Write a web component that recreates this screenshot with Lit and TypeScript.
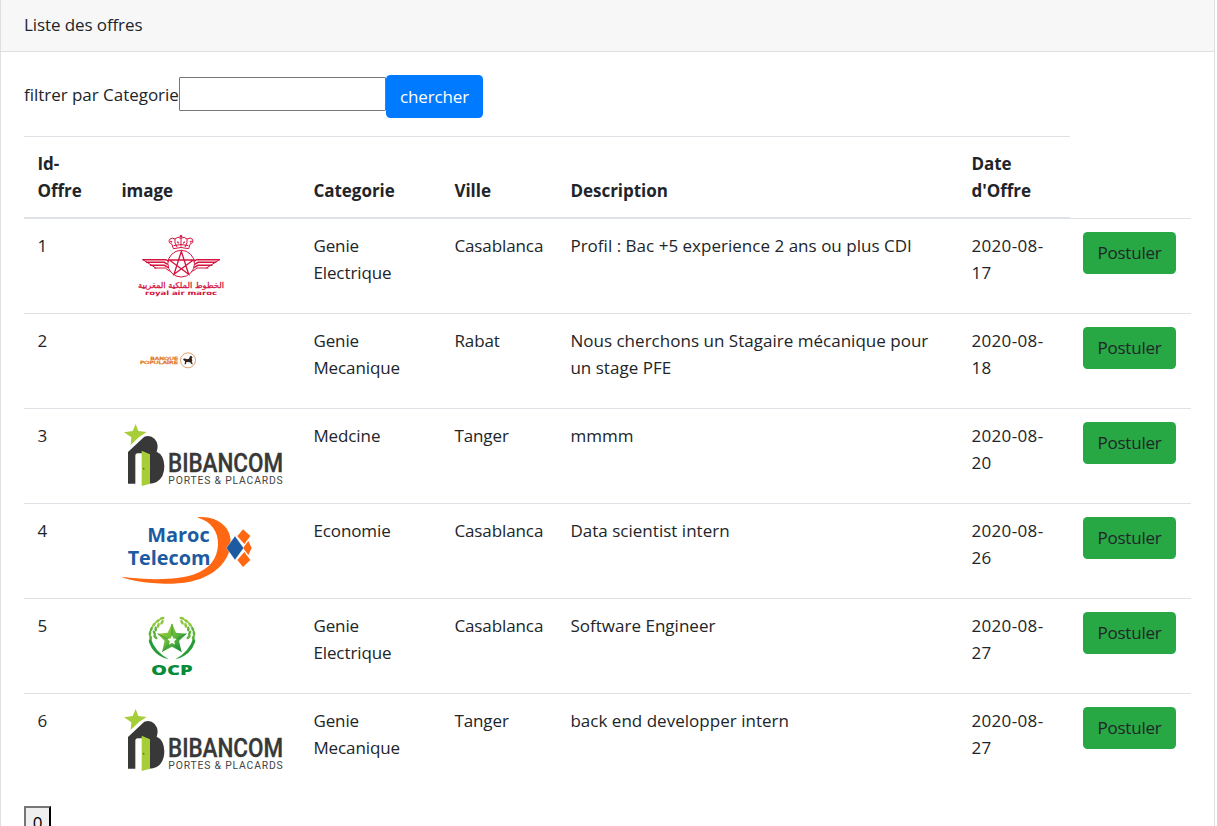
import { LitElement, html, css, svg } from "lit";
import { customElement, property } from "lit/decorators.js";

type Logo = "ram" | "bp" | "bibancom" | "telecom" | "ocp";

interface Offer {
  id: number;
  logo: Logo;
  category: string[];
  city: string;
  description: string[];
  date: string[];
}

const OFFERS: Offer[] = [
  { id: 1, logo: "ram", category: ["Genie", "Electrique"], city: "Casablanca", description: ["Profil : Bac +5 experience 2 ans ou plus CDI"], date: ["2020-08-", "17"] },
  { id: 2, logo: "bp", category: ["Genie", "Mecanique"], city: "Rabat", description: ["Nous cherchons un Stagaire mécanique pour", "un stage PFE"], date: ["2020-08-", "18"] },
  { id: 3, logo: "bibancom", category: ["Medcine"], city: "Tanger", description: ["mmmm"], date: ["2020-08-", "20"] },
  { id: 4, logo: "telecom", category: ["Economie"], city: "Casablanca", description: ["Data scientist intern"], date: ["2020-08-", "26"] },
  { id: 5, logo: "ocp", category: ["Genie", "Electrique"], city: "Casablanca", description: ["Software Engineer"], date: ["2020-08-", "27"] },
  { id: 6, logo: "bibancom", category: ["Genie", "Mecanique"], city: "Tanger", description: ["back end developper intern"], date: ["2020-08-", "27"] },
];

const wing = svg`
  <path d="M83 104H152L161 109" fill="none" stroke="#d5133f" stroke-width="4.500"/>
  <path d="M93 112H148L158 118" fill="none" stroke="#d5133f" stroke-width="4.500"/>
  <path d="M105 121H148L160 128" fill="none" stroke="#d5133f" stroke-width="4.500"/>
  <path d="M117 129H151L164 139M82 103L124 130" fill="none" stroke="#d5133f" stroke-width="3"/>`;

const leaves = [
  [62, 98, -15], [60, 85, 10], [64, 72, 25], [72, 59, 40], [83, 48, 55], [96, 40, 70],
  [76, 96, -45], [73, 84, -25], [77, 72, 0], [85, 61, 15], [96, 52, 30],
];
const branch = svg`
  <path d="M61 96Q73 139 116 163Q69 152 56 108Z" fill="#279c38"/>
  ${leaves.map(([x, y, r], i) => svg`<ellipse cx=${x} cy=${y} rx="4" ry="8" transform="rotate(${r} ${x} ${y})" fill=${i % 6 > 2 ? "#8cc63c" : "#5fb43c"}/>`)}`;

const LOGOS = {
  ram: svg`<svg class="logo" viewBox="18 21 495 201">
    <g fill="none" stroke="#d5133f" stroke-width="3">
      <path d="M175 71L171 58Q158 52 164 43Q171 36 180 42Q188 33 198 40Q208 33 216 42Q226 36 233 43Q238 53 225 58L221 71Q198 64 175 71Z"/>
      <path d="M180 42Q177 53 186 66M216 42Q219 53 210 66M198 40V65M176 62Q198 55 220 62"/>
      <path d="M166 48L171 52M230 48L225 52M187 50L191 55M209 50L205 55" stroke-width="4"/>
      <circle cx="198.500" cy="116" r="40"/>
      <path d="M199 79L221 148L163 105H235L177 148Z" stroke-width="4"/>
    </g>
    <circle cx="198" cy="34" r="4" fill="#d5133f"/>
    ${wing}<g transform="translate(397 0) scale(-1 1)">${wing}</g>
    <text class="arabic" x="198" y="189" text-anchor="middle" direction="rtl" font-size="24" textLength="258" lengthAdjust="spacingAndGlyphs" fill="#d5133f">الخطوط الملكية المغربية</text>
    <text class="wide" x="90" y="211" font-size="18" textLength="216" lengthAdjust="spacingAndGlyphs" fill="#d5133f">royal air maroc</text>
  </svg>`,
  bp: svg`<svg class="logo" viewBox="18 -24 495 201">
    <text class="wide light" x="106" y="75" font-size="13" textLength="83" lengthAdjust="spacingAndGlyphs" fill="#e47a2c">BANQUE</text>
    <text class="wide light" x="75" y="88" font-size="13" textLength="114" lengthAdjust="spacingAndGlyphs" fill="#e47a2c">POPULAIRE</text>
    <circle cx="219" cy="76" r="22.500" fill="#fff" stroke="#e08a4a" stroke-width="2.500"/>
    <path d="M204 72Q210 69 216 73L222 71Q223 63 228 62L233 67L230 70L232 76L230 81L234 88H230L225 82L214 81L213 88H209L210 79L206 76Z" fill="#33221b"/>
  </svg>`,
  bibancom: svg`<svg class="logo" viewBox="18 21 495 201">
    <path d="M62 27L70 48L95 51L73 65L47 90L49 67L27 52L53 48Z" fill="#a6ce39"/>
    <path d="M39 206V111L88 65Q107 59 119 72Q133 88 125 110Q147 119 148 154Q148 188 125 201Q115 206 102 206V123L80 115H68Q61 115 61 123V206Z" fill="#383838"/>
    <path d="M80 107L105 118V206L80 213Z" fill="#a6ce39"/>
    <circle cx="86" cy="161" r="2.500" fill="#567522"/>
    <text class="sans bold" x="159" y="170" font-size="76" textLength="345" lengthAdjust="spacingAndGlyphs" fill="#383838">BIBANCOM</text>
    <text class="sans" x="160" y="207" font-size="31" textLength="343" lengthAdjust="spacing" fill="#444">PORTES &amp; PLACARDS</text>
  </svg>`,
  telecom: svg`<svg class="logo" viewBox="18 21 495 201">
    <path d="M246 22C308 16 350 53 347 100C344 166 275 221 171 221C105 221 51 214 19 200C99 211 186 211 238 193C284 177 307 145 309 105C311 67 290 35 246 22Z" fill="#ff6712"/>
    <path d="M384 58L406 78L388 102L367 79Z M389 107L400 93L410 114L400 135L389 121L385 114Z M388 126L406 150L384 171L367 150Z" fill="#ff6712"/>
    <path d="M360 78L386 114L360 150L334 114Z" fill="#1c5ba1" stroke="#fff" stroke-width="1"/>
    <text class="condensed" x="97" y="95" font-size="61" textLength="187" lengthAdjust="spacingAndGlyphs" fill="#1c5ba1">Maroc</text>
    <text class="condensed" x="38" y="165" font-size="61" textLength="248" lengthAdjust="spacingAndGlyphs" fill="#1c5ba1">Telecom</text>
  </svg>`,
  ocp: svg`<svg class="logo" viewBox="-27 21 495 201">
    <defs><linearGradient id="star" x1="0" y1="0" x2="1" y2="1"><stop stop-color="#c6db38"/><stop offset=".5" stop-color="#62b83c"/><stop offset="1" stop-color="#078338"/></linearGradient></defs>
    ${branch}<g transform="translate(252 0) scale(-1 1)">${branch}</g>
    <path d="M126 55L138 83L170 86L147 108L155 141L126 125L96 141L104 108L82 86L113 83Z" fill="url(#star)"/>
    <path d="M126 91L130 100L140 102L133 109L135 119L126 114L117 119L119 109L112 102L122 100Z" fill="#f3faea"/>
    <path d="M126 57V91M169 86L140 102M154 140L135 119M97 140L117 119M83 86L112 102" stroke="#17863b" stroke-width="2"/>
    <text class="ocp" x="63" y="209" font-size="44" textLength="125" lengthAdjust="spacingAndGlyphs" fill="#078b38">OCP</text>
  </svg>`,
};

const lines = (parts: string[]) => parts.map((part, i) => (i ? html`<br />${part}` : part));

@customElement("offer-row")
export class OfferRow extends LitElement {
  @property({ attribute: false }) offer!: Offer;

  static styles = css`
    :host { display: grid; grid-template-columns: var(--columns); height: 95px; box-sizing: border-box; border-top: 1px solid #dee2e6; }
    .cell { padding: 13px 0 0 13.4px; white-space: nowrap; }
    .picture { padding-left: 12.7px; }
    .city { letter-spacing: -0.1px; }
    .date { letter-spacing: 0.35px; }
    .description { letter-spacing: 0.02px; }
    .action { padding-left: 13px; }
    .logo { display: block; width: 165px; height: 67px; overflow: visible; }
    .arabic { font-family: "DejaVu Sans", sans-serif; font-weight: 400; stroke: #d5133f; stroke-width: 0.8px; }
    .wide { font-family: "DejaVu Sans", sans-serif; font-weight: 700; }
    .light { font-weight: 400; stroke: #e47a2c; stroke-width: 0.9px; }
    .ocp { font-family: "Open Sans", sans-serif; font-weight: 800; }
    .sans { font-family: Roboto, sans-serif; }
    .bold { font-weight: 500; stroke: #383838; stroke-width: 1px; }
    .condensed { font-family: "Open Sans", sans-serif; font-weight: 700; }
    .apply { display: block; box-sizing: border-box; width: 93px; height: 42px; padding: 0 0 2px; border: 0; border-radius: 4.5px; background: #28a745; color: #212529; font: inherit; letter-spacing: -0.2px; }
  `;

  render() {
    const o = this.offer;
    return html`
      <div class="cell">${o.id}</div>
      <div class="cell picture">${LOGOS[o.logo]}</div>
      <div class="cell">${lines(o.category)}</div>
      <div class="cell city">${o.city}</div>
      <div class="cell description">${lines(o.description)}</div>
      <div class="cell date">${lines(o.date)}</div>
      <div class="cell action"><button class="apply">Postuler</button></div>
    `;
  }
}

@customElement("app-root")
export class AppRoot extends LitElement {
  static styles = css`
    :host {
      --columns: 84px 192px 141px 116px 401px 112px 121px;
      display: block; height: 826px; overflow: hidden; background: #fff; color: #212529;
      font: 400 17px/27px "Open Sans", "Noto Sans", sans-serif; letter-spacing: -0.1px;
    }
    .card { box-sizing: border-box; width: 1215px; height: 826px; border: solid #dfdfdf; border-width: 0 1px; }
    .header { box-sizing: border-box; height: 52px; padding: 11px 23px; background: #f7f7f7; border-bottom: 1px solid #dfdfdf; }
    .body { padding: 23px; }
    .filter { display: flex; align-items: flex-start; height: 61px; }
    .label { width: 155px; padding-top: 6px; white-space: nowrap; letter-spacing: -0.03px; }
    .field { box-sizing: border-box; width: 207px; height: 34px; margin-top: 2px; border: 1px solid #767676; border-radius: 1px; padding: 1px 2px; font: inherit; }
    .search { width: 97px; height: 43px; padding: 0; border: 0; border-radius: 4.5px; background: #007bff; color: #fff; font: inherit; letter-spacing: -0.15px; }
    .head { display: grid; grid-template-columns: var(--columns); height: 82px; }
    .title { display: flex; align-items: flex-end; box-sizing: border-box; padding: 0 0 13px 13.4px; border-top: 1px solid #dee2e6; border-bottom: 1px solid #dee2e6; font-weight: 700; letter-spacing: -0.02px; }
    .page { box-sizing: border-box; width: 27px; height: 32px; margin-top: 18px; padding: 0; border: 2px outset #767676; border-color: #767676 #212121 #212121 #767676; background: #efefef; color: #000; font: inherit; }
  `;

  render() {
    return html`
      <div class="card">
        <div class="header">Liste des offres</div>
        <div class="body">
          <div class="filter">
            <label class="label" for="category">filtrer par Categorie</label>
            <input class="field" id="category" />
            <button class="search">chercher</button>
          </div>
          <div class="head">
            ${[["Id-", "Offre"], ["image"], ["Categorie"], ["Ville"], ["Description"], ["Date", "d'Offre"]].map(
              (t) => html`<div class="title"><span>${lines(t)}</span></div>`,
            )}
          </div>
          ${OFFERS.map((offer) => html`<offer-row .offer=${offer}></offer-row>`)}
          <button class="page">0</button>
        </div>
      </div>
    `;
  }
}
